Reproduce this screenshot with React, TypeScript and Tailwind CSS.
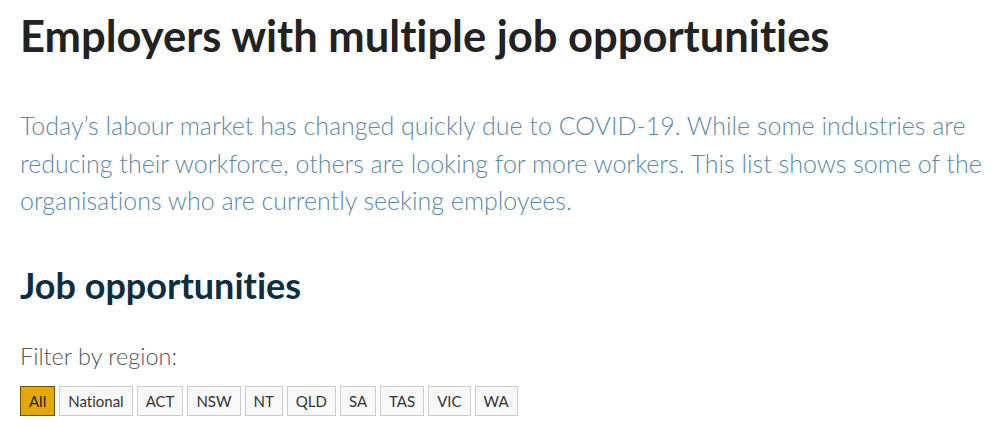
const regions = ['All', 'National', 'ACT', 'NSW', 'NT', 'QLD', 'SA', 'TAS', 'VIC', 'WA']

export default function App() {
  return (
    <div className="min-h-screen bg-white pl-[20px] pr-[8px] pt-[9px] font-['Lato',sans-serif] [font-variant-ligatures:none]">
      <h1 className="text-[43.5px] font-bold leading-[52px] text-[#222222]">Employers with multiple job opportunities</h1>

      <p className="mt-[46px] text-[25px] font-light leading-[37.5px] text-[#5b89a8]">
        Today’s labour market has changed quickly due to COVID-19. While some industries are reducing their workforce, others are looking for more workers. This list shows some of the organisations who are currently seeking employees.
      </p>

      <h2 className="mt-[44px] text-[36px] font-bold leading-[42px] text-[#0f2d40]">Job opportunities</h2>

      <p className="mt-[36px] text-[23.5px] font-light leading-[28px] text-[#555555]">Filter by region:</p>

      <div className="mt-[16px] flex gap-[4px]">
        {regions.map((r) => (
          <button
            key={r}
            className={`h-[30px] border px-[8px] text-[15px] leading-[28px] ${
              r === 'All' ? 'border-[#6b5200] bg-[#e5a800] text-[#222]' : 'border-[#cccccc] bg-[#f8f8f8] text-[#333]'
            }`}
          >
            {r}
          </button>
        ))}
      </div>
    </div>
  )
}
